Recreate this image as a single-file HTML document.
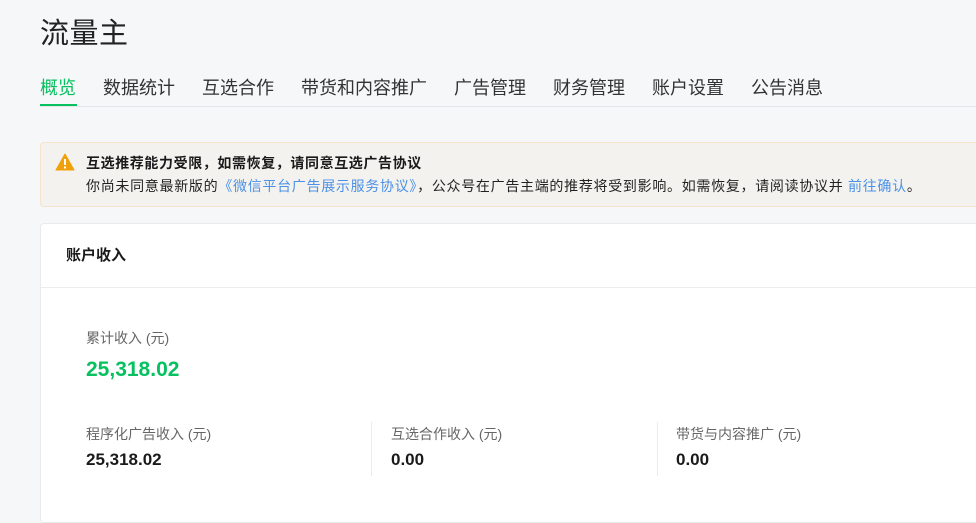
<!DOCTYPE html>
<html><head><meta charset="utf-8"><style>
*{margin:0;padding:0;box-sizing:border-box}
body{width:976px;height:498px;overflow:hidden;background:#f6f7f9;font-family:"Liberation Sans","Noto Sans CJK SC",sans-serif;color:#1a1a1a;position:relative}
.abs{position:absolute;white-space:nowrap}
.title{left:40px;top:14px;font-size:29px;color:#222;line-height:40px;letter-spacing:0.5px}
.tabs{left:40px;top:74px;font-size:18px;line-height:28px;color:#333}
.tabs span{margin-right:27px}
.tabs .on{color:#07c160}
.uline{left:40px;top:104px;width:37px;height:2px;background:#07c160}
.gline{left:40px;top:106px;width:936px;height:1px;background:#e4e6e9}
.alert{left:40px;top:142px;width:960px;height:65px;background:#f4f2ee;border:1px solid #f5e3cd;border-radius:4px}
.card{left:40px;top:223px;width:960px;height:300px;background:#fff;border:1px solid #e9eaec;border-radius:4px}
.link{color:#4b91e8}
.lbl{font-size:14px;color:#666}
.val{font-size:17px;font-weight:bold;color:#1a1a1a}
.vd{width:1px;height:54px;background:#ececec;top:422px}
</style></head><body>
<div class="abs title">流量主</div>
<div class="abs tabs"><span class="on">概览</span><span>数据统计</span><span>互选合作</span><span>带货和内容推广</span><span>广告管理</span><span>财务管理</span><span>账户设置</span><span>公告消息</span></div>
<div class="abs gline"></div>
<div class="abs uline"></div>
<div class="abs alert"></div>
<svg class="abs" style="left:55px;top:153px" width="20" height="18" viewBox="0 0 20 18"><path d="M10 1L19 17H1Z" fill="#f0a10a" stroke="#f0a10a" stroke-linejoin="round"/><rect x="9" y="6" width="2" height="6" fill="#fff"/><rect x="9" y="13.5" width="2" height="2" fill="#fff"/></svg>
<div class="abs" style="left:86px;top:153px;font-size:14px;font-weight:bold;line-height:20px;letter-spacing:0.6px">互选推荐能力受限，如需恢复，请同意互选广告协议</div>
<div class="abs" style="left:86px;top:176px;font-size:14px;line-height:20px;color:#222;letter-spacing:0.7px">你尚未同意最新版的<span class="link">《微信平台广告展示服务协议》</span>，公众号在广告主端的推荐将受到影响。如需恢复，请阅读协议并 <span class="link">前往确认</span>。</div>
<div class="abs card"></div>
<div class="abs" style="left:66px;top:245px;font-size:15px;font-weight:bold;line-height:22px">账户收入</div>
<div class="abs" style="left:41px;top:287px;width:935px;height:1px;background:#ececec"></div>
<div class="abs lbl" style="left:86px;top:328px;line-height:20px">累计收入 (元)</div>
<div class="abs" style="left:86px;top:356px;font-size:21px;font-weight:bold;color:#07c160;line-height:28px">25,318.02</div>
<div class="abs lbl" style="left:86px;top:424px;line-height:20px">程序化广告收入 (元)</div>
<div class="abs val" style="left:86px;top:449px;line-height:22px">25,318.02</div>
<div class="abs vd" style="left:371px"></div>
<div class="abs lbl" style="left:391px;top:424px;line-height:20px">互选合作收入 (元)</div>
<div class="abs val" style="left:391px;top:449px;line-height:22px">0.00</div>
<div class="abs vd" style="left:657px"></div>
<div class="abs lbl" style="left:676px;top:424px;line-height:20px">带货与内容推广 (元)</div>
<div class="abs val" style="left:676px;top:449px;line-height:22px">0.00</div>
</body></html>
